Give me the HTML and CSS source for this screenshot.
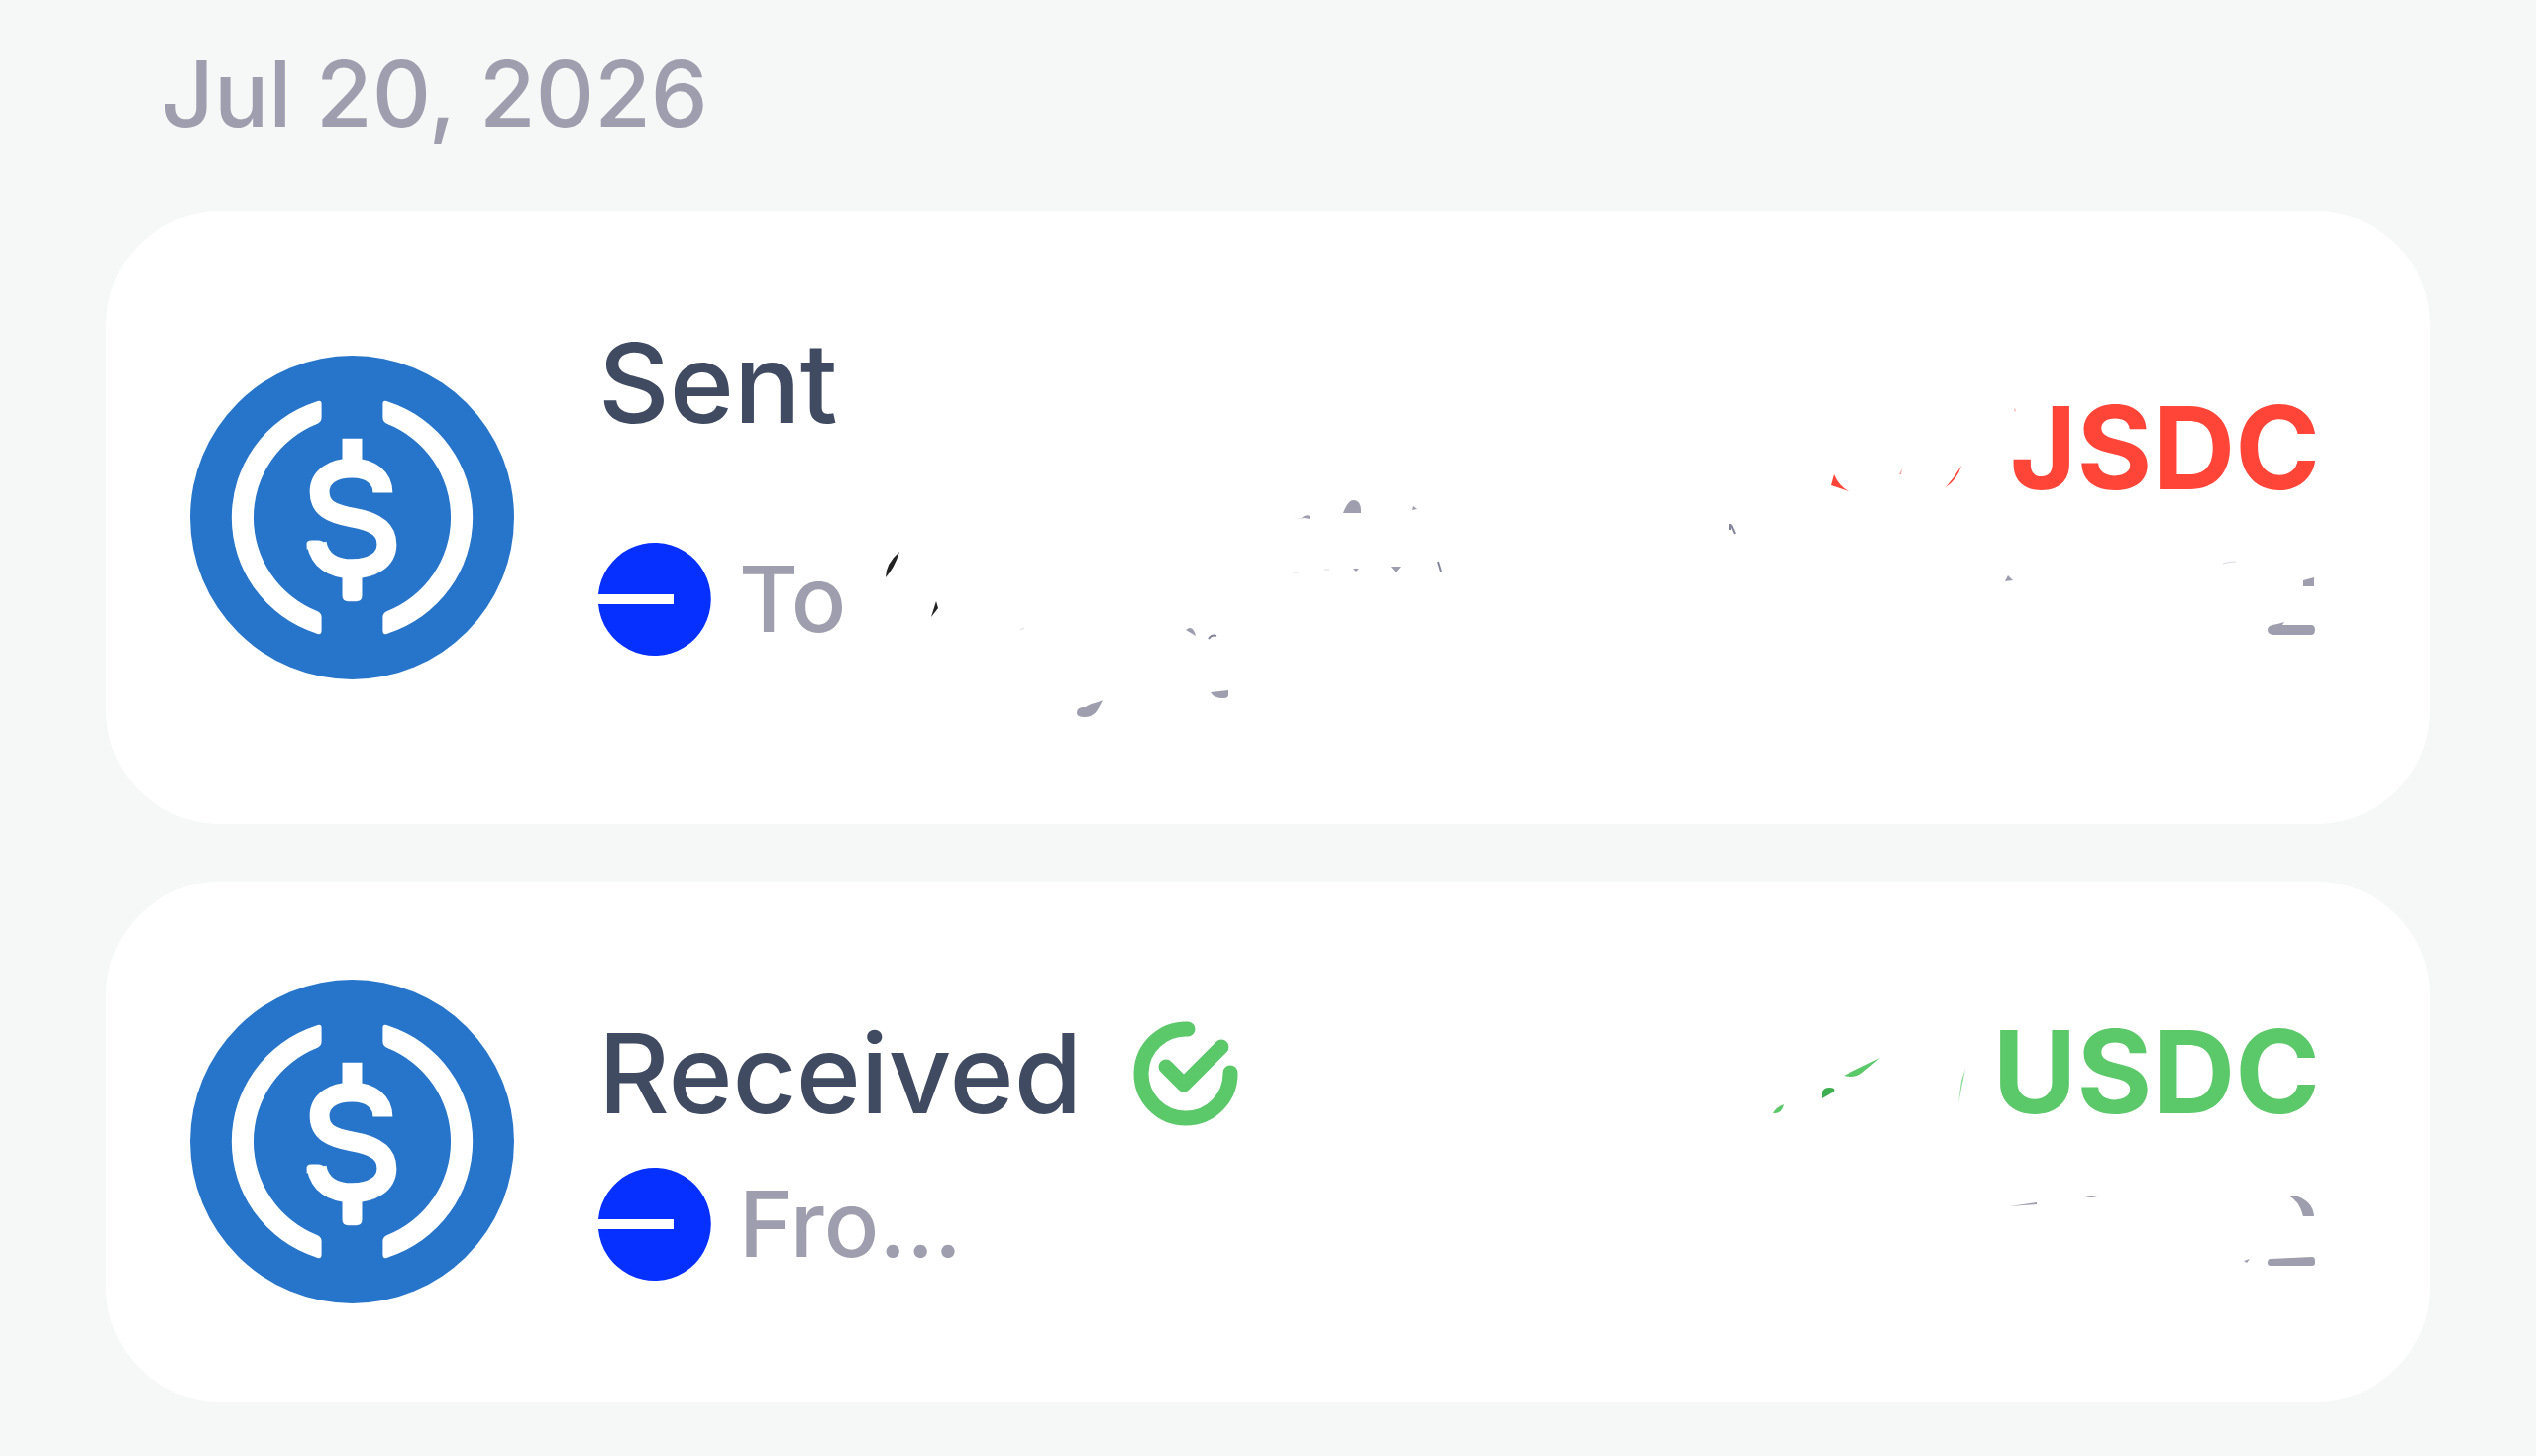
FILE: index.html
```html
<!DOCTYPE html>
<html lang="en">
<head>
<meta charset="utf-8">
<title>Transactions</title>
<link rel="stylesheet" href="styles.css">
</head>
<body>
<svg class="defs" aria-hidden="true">
  <symbol id="usdc" viewBox="-164 -164 328 328">
    <circle r="164" fill="#2775ca"/>
    <path fill="#fff" d="M-31 -115V-101Q-31 -97 -35 -95A102 102 0 0 0 -35 95Q-31 97 -31 101V114Q-31 120 -37 117A123 123 0 0 1 -37 -117Q-31 -120 -31 -115ZM31 -115V-101Q31 -97 35 -95A102 102 0 0 1 35 95Q31 97 31 101V114Q31 120 37 117A123 123 0 0 0 37 -117Q31 -120 31 -115Z"/>
    <path fill="none" stroke="#fff" stroke-width="20" d="M31 -25C31 -40 19 -50 0 -50C-20 -50 -33 -41 -33 -26C-33 -10 -22 -4 0 0C24 4 35 12 35 27C35 43 20 52 0 52C-20 52 -33 43 -36 26"/>
    <path fill="#fff" d="M-10 -80H10V-48H-10ZM-10 50H10V79Q10 85 4 85H-4Q-10 85 -10 79ZM-46 28Q-47 23 -41 23H-35Q-29 23 -28 27V30L-46 32Z"/>
  </symbol>
  <symbol id="base" viewBox="0 0 114 114">
    <path fill="#0530ff" d="M0 52A57 57 0 1 1 0 62H76V52Z"/>
  </symbol>
</svg>
<main class="page">
  <h1 class="date">Jul 20, 2026</h1>

  <article class="card card-sent">
    <svg class="coin" role="img" aria-label="USDC"><use href="#usdc"/></svg>
    <div class="details">
      <h2 class="title">Sent</h2>
      <div class="meta"><svg class="chain" role="img" aria-label="Base"><use href="#base"/></svg><span>To</span></div>
    </div>
    <div class="amount negative">JSDC</div>
    <svg class="marks" viewBox="107 214 2346 619" aria-hidden="true">
      <g fill="#222">
        <path d="M908 558Q894 570 894 584Q903 574 908 558Z"/>
        <path d="M945 608L940 624L947 615Z"/>
      </g>
      <g fill="#9e9eae">
        <path d="M1087 721C1087 715 1092 715 1096 715C1101 711 1108 711 1113 708C1108 719 1104 725 1095 725Q1087 725 1087 721Z"/>
        <path d="M1222 700L1240 698V703Q1240 706 1235 706Q1225 706 1222 700Z"/>
        <path d="M1356 519C1360 509 1363 506 1367 506Q1374 507 1374 516V519Z"/>
        <path d="M1306 525L1314 524Q1318 520 1322 522V525L1317 524Z"/>
        <path d="M1426 512L1430 515L1425 516Z"/>
        <path d="M2325 587L2336 584V593H2325Z"/>
        <path d="M2294 632Q2300 631 2306 629L2304 632H2333Q2337 632 2337 637Q2337 642 2333 642H2294Q2289 641 2289 637Q2289 633 2294 632Z"/>
        <path d="M2027 582L2032 587L2024 588Z"/>
        <path d="M1197 637Q1204 631 1207 643L1202 640ZM1404 573L1414 573L1409 579ZM1366 575H1372L1369 578Z"/>
      </g>
      <g fill="none" stroke="#85869a" stroke-width="2">
        <path d="M1220 646Q1223 641 1228 643M1452 568L1455 578M1746 530V536M1747 531L1751 540"/>
      </g>
      <path fill="none" stroke="#d9dae0" d="M1030 637L1034 635M1306 579H1310M1337 576H1342M2244 570Q2250 568 2257 568"/>
      <g fill="#ff4538">
        <path d="M1851 480L1848 491L1866 497Q1856 492 1851 480Z"/>
        <path d="M1980 471Q1976 485 1964 493Q1973 483 1980 471Z"/>
        <path opacity=".5" d="M1920 474L1919 480L1917 480ZM2034 413L2035 417L2033 415Z"/>
      </g>
    </svg>
  </article>

  <article class="card card-received">
    <svg class="coin" role="img" aria-label="USDC"><use href="#usdc"/></svg>
    <div class="details">
      <h2 class="title">Received
        <svg class="check" viewBox="0 0 106 106" role="img" aria-label="Completed"><path d="M55 8A45 45 0 1 0 98 52M33 46L51 64L89 26"/></svg>
      </h2>
      <div class="meta"><svg class="chain" role="img" aria-label="Base"><use href="#base"/></svg><span>Fro...</span></div>
    </div>
    <div class="amount positive">USDC</div>
    <svg class="marks" viewBox="107 891 2346 525" aria-hidden="true">
      <g fill="#5bc869">
        <path d="M1790 1125Q1793 1119 1801 1116Q1799 1126 1790 1125Z"/>
        <path fill="#3fae50" d="M1839 1110V1103Q1841 1099 1846 1099Q1853 1099 1851 1103Z"/>
        <path d="M1861 1087L1898 1069L1880 1084Q1873 1090 1861 1087Z"/>
        <path opacity=".7" d="M1984 1080L1977 1115L1980 1092Z"/>
      </g>
      <g fill="#9e9eae">
        <path d="M2029 1219L2056 1215V1217Z"/>
        <path d="M2105 1209Q2111 1207 2117 1209Q2111 1211 2105 1209Z"/>
        <path d="M2310 1208C2325 1207 2336 1218 2336 1229H2325Q2321 1213 2310 1208Z"/>
        <path d="M2292 1272L2334 1270Q2337 1270 2337 1274V1276Q2337 1279 2334 1279H2292Q2289 1279 2289 1276Q2289 1272 2292 1272Z"/>
        <path d="M2265 1274L2271 1272L2268 1276Z"/>
      </g>
    </svg>
  </article>
</main>
</body>
</html>
```
FILE: styles.css
```css
* { box-sizing: border-box; }

body {
  margin: 0;
  background: #f5f8f7;
  font-family: Inter, "Liberation Sans", sans-serif;
}

.defs {
  position: absolute;
  width: 0;
  height: 0;
}

.page {
  display: flex;
  flex-direction: column;
  gap: 58px;
  padding: 35px 107px 48px;
}

.date {
  margin: 0;
  padding-left: 56px;
  color: #9e9eae;
  font-size: 92px;
  font-weight: 500;
  line-height: 120px;
}

.card {
  position: relative;
  display: flex;
  align-items: center;
  gap: 85px;
  padding: 99px 111px 99px 85px;
  border-radius: 115px;
  background: #fff;
}

.coin {
  flex: none;
  width: 327px;
  height: 327px;
}

.details {
  display: flex;
  flex: 1;
  flex-direction: column;
  gap: 20px;
}

.card-sent .details { gap: 86px; }
.card-received .details { padding-bottom: 4px; }

.title {
  display: flex;
  align-items: center;
  gap: 52px;
  margin: 0;
  color: #404b61;
  font-size: 111px;
  font-weight: 500;
  line-height: 150px;
}

.check {
  width: 106px;
  height: 106px;
  fill: none;
  stroke: #5bc869;
  stroke-width: 15px;
  stroke-linecap: round;
  stroke-linejoin: round;
}

.meta {
  display: flex;
  gap: 28px;
  color: #9e9eae;
  font-size: 92px;
  font-weight: 500;
  line-height: 114px;
}

.card-sent .meta { min-height: 185px; }

.chain {
  width: 114px;
  height: 114px;
}

.amount {
  min-height: 282px;
  font-size: 116px;
  font-weight: 700;
  line-height: 140px;
}

.negative { color: #ff4538; }
.positive { color: #5bc869; }

.marks {
  position: absolute;
  inset: 0;
  width: 100%;
  height: 100%;
}
```
